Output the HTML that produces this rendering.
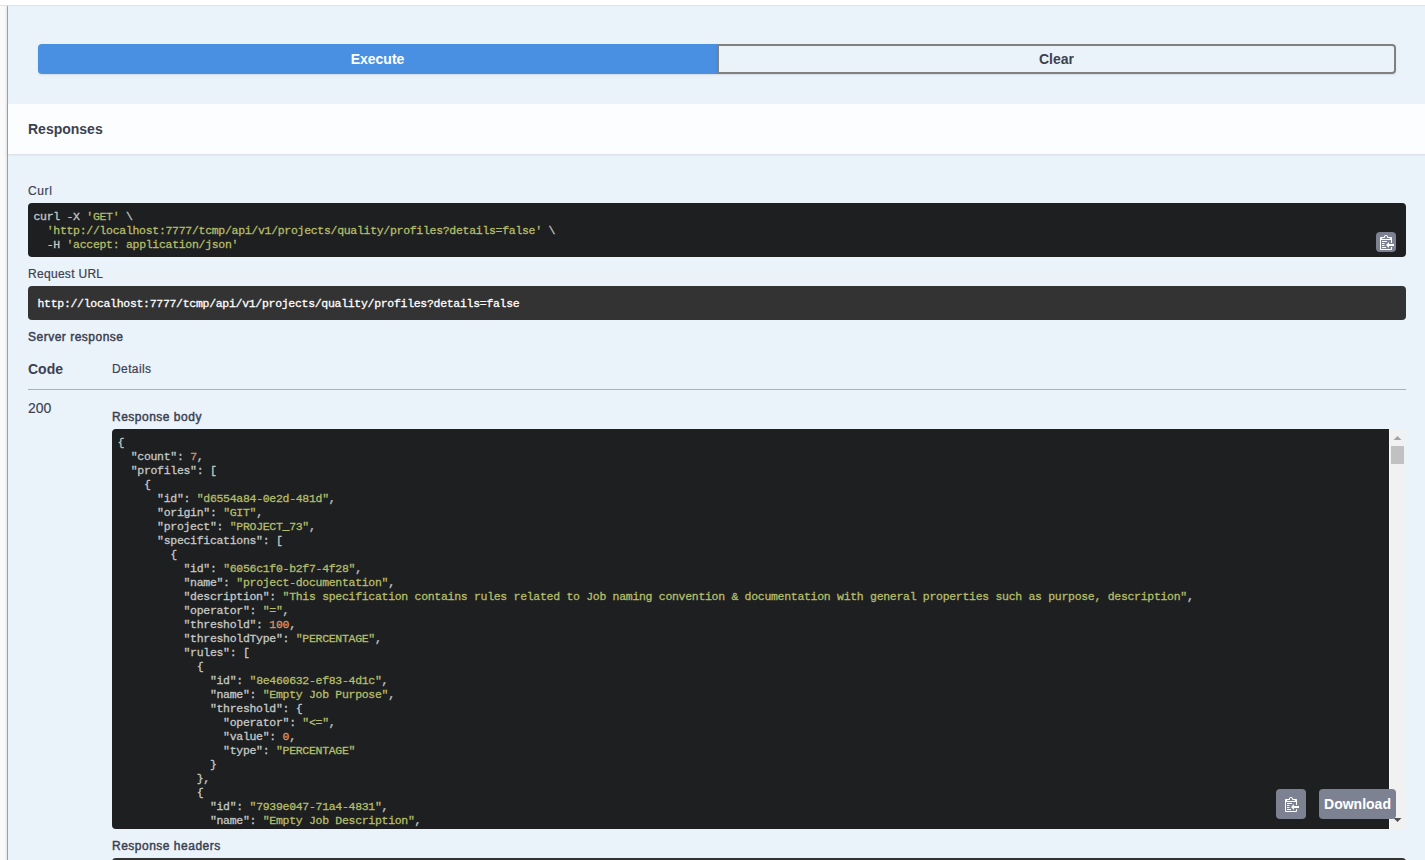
<!DOCTYPE html>
<html><head><meta charset="utf-8">
<style>
html,body{margin:0;padding:0;width:1425px;height:860px;overflow:hidden;background:#fafafa;font-family:"Liberation Sans",sans-serif;color:#3b4151;}
.abs{position:absolute;}
#top{left:0;top:0;width:1425px;height:5px;background:#fff;}
#topline{left:0;top:5px;width:1425px;height:1px;background:#e0e1e0;}
#op{left:7px;top:6px;width:1420px;height:900px;background:#ebf3fa;border-left:1px solid #61affe;box-shadow:0 0 3px rgba(0,0,0,.19);}
.btn{position:absolute;top:44px;height:30px;box-sizing:border-box;font-size:14px;font-weight:bold;text-align:center;line-height:30px;}
#exec{left:38px;width:679px;background:#4990e2;color:#fff;border-radius:4px 0 0 4px;box-shadow:0 1px 2px rgba(0,0,0,.1);}
#clear{left:717px;width:679px;border:2px solid #808080;border-radius:0 4px 4px 0;color:#3b4151;line-height:26px;box-shadow:0 1px 2px rgba(0,0,0,.1);}
#resphdr{left:8px;top:104px;width:1420px;height:50px;background:#fbfdfe;box-shadow:0 1px 2px rgba(0,0,0,.1);}
.t{position:absolute;white-space:pre;line-height:14px;}
.h14b{font-size:14px;font-weight:bold;}
.h12{font-size:12px;-webkit-text-stroke:0.2px #3b4151;}
.h12b{font-size:12px;-webkit-text-stroke:0.45px #3b4151;letter-spacing:0.5px;}
.mono{font-family:"Liberation Mono",monospace;font-size:11.5px;letter-spacing:-0.3px;-webkit-text-stroke:0.3px;line-height:14px;white-space:pre;}
#curl{left:28px;top:203px;width:1378px;height:54px;background:#1d1f21;border-radius:4px;}
#curl pre{margin:0;position:absolute;left:5.5px;top:7px;color:#c5c8c6;}
.s{color:#b5bd68;}
.n{color:#de935f;}
#requrl{left:28px;top:286px;width:1378px;height:34px;background:#333;border-radius:4px;}
#requrl pre{margin:0;position:absolute;left:9.5px;top:11px;color:#fff;}
#rule{left:28px;top:389px;width:1378px;height:1px;background:#aab0bb;}
#body{left:112px;top:429px;width:1294px;height:400px;background:#1d1f21;border-radius:4px 0 0 4px;overflow:hidden;}
#body pre{margin:0;position:absolute;left:5.5px;top:7px;color:#c5c8c6;}
#sb{left:1389px;top:429px;width:17px;height:400px;background:#f1f1f1;}
#thumb{left:1391px;top:446px;width:13px;height:18px;background:#c1c1c1;}
.cp svg{margin-left:2px;}
.cp{position:absolute;background:#7d8293;border-radius:4px;display:flex;align-items:center;justify-content:center;}
#dl{left:1319px;top:789px;width:77px;height:30px;background:#7d8293;border-radius:4px;color:#fff;font-size:14px;font-weight:bold;line-height:30px;text-align:center;}
#hdrs{left:112px;top:858px;width:1294px;height:40px;background:#333;border-radius:4px;}
</style></head>
<body>
<div class="abs" id="op"></div>
<div class="abs" id="top"></div>
<div class="abs" id="topline"></div>
<div id="exec" class="btn">Execute</div>
<div id="clear" class="btn">Clear</div>
<div class="abs" id="resphdr"></div>
<div class="t h14b" style="left:28px;top:122px;">Responses</div>

<div class="t h12" style="left:28px;top:184px;letter-spacing:0.6px;">Curl</div>
<div class="abs" id="curl"><pre class="mono">curl -X <span class="s">'GET'</span> \
  <span class="s">'http://localhost:7777/tcmp/api/v1/projects/quality/profiles?details=false'</span> \
  -H <span class="s">'accept: application/json'</span></pre>
<div class="cp" style="left:1348px;top:29px;width:20px;height:20px;">
<svg width="14" height="15" viewBox="0 1 14 15"><path fill="#fff" fill-rule="evenodd" d="M2 13h4v1H2v-1zm5-6H2v1h5V7zm2 3V8l-3 3 3 3v-2h5v-2H9zM4.5 9H2v1h2.5V9zM2 12h2.5v-1H2v1zm9 1h1v2c-.02.28-.11.52-.3.7-.19.18-.42.28-.7.3H1c-.55 0-1-.45-1-1V4c0-.55.45-1 1-1h3c0-1.110.89-2 2-2 1.11 0 2 .89 2 2h3c.55 0 1 .45 1 1v5h-1V6H1v9h10v-2zM2 5h8c0-.55-.45-1-1-1H8c-.55 0-1-.45-1-1s-.45-1-1-1-1 .45-1 1-.45 1-1 1H3c-.55 0-1 .45-1 1z"/></svg>
</div>
</div>

<div class="t h12" style="left:28px;top:267px;letter-spacing:0.3px;">Request URL</div>
<div class="abs" id="requrl"><pre class="mono">http://localhost:7777/tcmp/api/v1/projects/quality/profiles?details=false</pre></div>

<div class="t h12b" style="left:28px;top:330px;">Server response</div>
<div class="t h14b" style="left:28px;top:362px;">Code</div>
<div class="t h12" style="left:112px;top:362px;letter-spacing:0.4px;">Details</div>
<div class="abs" id="rule"></div>
<div class="t" style="left:28px;top:401px;font-size:14px;-webkit-text-stroke:0.15px #3b4151;">200</div>
<div class="t h12b" style="left:112px;top:410px;">Response body</div>

<div class="abs" id="body"><pre class="mono">{
  "count": <span class="n">7</span>,
  "profiles": [
    {
      "id": <span class="s">"d6554a84-0e2d-481d"</span>,
      "origin": <span class="s">"GIT"</span>,
      "project": <span class="s">"PROJECT_73"</span>,
      "specifications": [
        {
          "id": <span class="s">"6056c1f0-b2f7-4f28"</span>,
          "name": <span class="s">"project-documentation"</span>,
          "description": <span class="s">"This specification contains rules related to Job naming convention &amp; documentation with general properties such as purpose, description"</span>,
          "operator": <span class="s">"="</span>,
          "threshold": <span class="n">100</span>,
          "thresholdType": <span class="s">"PERCENTAGE"</span>,
          "rules": [
            {
              "id": <span class="s">"8e460632-ef83-4d1c"</span>,
              "name": <span class="s">"Empty Job Purpose"</span>,
              "threshold": {
                "operator": <span class="s">"&lt;="</span>,
                "value": <span class="n">0</span>,
                "type": <span class="s">"PERCENTAGE"</span>
              }
            },
            {
              "id": <span class="s">"7939e047-71a4-4831"</span>,
              "name": <span class="s">"Empty Job Description"</span>,
              "threshold": {</pre></div>
<div class="abs" id="sb"></div>
<div class="abs" id="thumb"></div>
<div class="abs" style="left:1389px;top:429px;width:1px;height:400px;background:#f9f9f9;"></div>
<svg class="abs" style="left:1389px;top:429px;" width="17" height="400"><polygon points="4.5,11 12.5,11 8.5,7" fill="#a3a3a3"/><polygon points="4.5,389 12.5,389 8.5,393" fill="#505050"/></svg>
<div class="cp" style="left:1276px;top:789px;width:30px;height:30px;">
<svg width="14" height="15" viewBox="0 1 14 15"><path fill="#fff" fill-rule="evenodd" d="M2 13h4v1H2v-1zm5-6H2v1h5V7zm2 3V8l-3 3 3 3v-2h5v-2H9zM4.5 9H2v1h2.5V9zM2 12h2.5v-1H2v1zm9 1h1v2c-.02.28-.11.52-.3.7-.19.18-.42.28-.7.3H1c-.55 0-1-.45-1-1V4c0-.55.45-1 1-1h3c0-1.110.89-2 2-2 1.11 0 2 .89 2 2h3c.55 0 1 .45 1 1v5h-1V6H1v9h10v-2zM2 5h8c0-.55-.45-1-1-1H8c-.55 0-1-.45-1-1s-.45-1-1-1-1 .45-1 1-.45 1-1 1H3c-.55 0-1 .45-1 1z"/></svg>
</div>
<div class="abs" id="dl">Download</div>
<div class="t h12b" style="left:112px;top:839px;">Response headers</div>
<div class="abs" id="hdrs"></div>
</body></html>
